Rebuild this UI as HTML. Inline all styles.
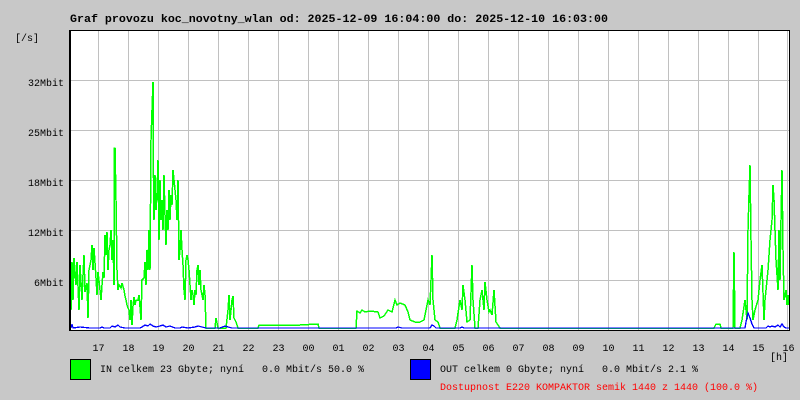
<!DOCTYPE html>
<html><head><meta charset="utf-8"><style>
html,body{margin:0;padding:0;background:#c8c8c8;}
svg{display:block}
text{font-family:"Liberation Mono","DejaVu Sans Mono",monospace;font-size:10px;fill:#000}
</style></head><body>
<svg width="800" height="400" viewBox="0 0 800 400" xmlns="http://www.w3.org/2000/svg">
<rect x="0" y="0" width="800" height="400" fill="#c8c8c8"/>
<rect x="70" y="30" width="720" height="300" fill="#fff"/>
<g stroke="#c0c0c0" stroke-width="1" shape-rendering="crispEdges">
<path d="M98.5 30V330M128.5 30V330M158.5 30V330M188.5 30V330M218.5 30V330M248.5 30V330M278.5 30V330M308.5 30V330M338.5 30V330M368.5 30V330M398.5 30V330M428.5 30V330M458.5 30V330M488.5 30V330M518.5 30V330M548.5 30V330M578.5 30V330M608.5 30V330M638.5 30V330M668.5 30V330M698.5 30V330M728.5 30V330M758.5 30V330M787.5 30V330"/>
<path d="M70 80.5H790M70 130.5H790M70 180.5H790M70 230.5H790M70 280.5H790"/>
</g>
<polyline fill="none" stroke="#00ff00" stroke-width="1.5" shape-rendering="crispEdges" points="71,310 72,262 73,300 74,258 76,285 77,262 79,310 80,265 82,300 83,275 84,255 85,292 87,283 88,318 89,270 91,260 92,245 93,270 94,248 96,278 97,295 98,272 100,290 101,300 102,285 103,272 104,278 105,235 106,255 107,232 108,270 109,250 110,245 111,230 112,260 113,240 114,285 114,148 115,148 116,200 117,270 118,290 119,285 120,286 121,288 122,283 124,290 125,296 126,300 127,305 128,308 129,310 130,320 131,300 132,325 133,306 134,297 135,305 136,300 138,300 139,295 140,307 141,320 142,280 144,278 145,262 146,285 147,250 148,270 149,230 150,270 151,140 152,110 153,82 153,135 154,220 155,175 156,210 157,195 158,160 159,240 160,180 161,220 162,200 163,230 164,175 165,215 166,245 167,210 168,230 169,190 170,220 171,195 172,205 173,170 174,180 175,190 176,200 177,220 178,180 179,260 180,250 181,230 182,250 183,265 184,290 185,300 186,260 187,255 188,260 189,270 190,285 191,300 192,290 193,295 194,305 195,290 196,295 197,270 198,265 199,285 200,270 201,290 202,295 203,300 204,285 205,295 206,328 215,328 216,318 218,328 226,328 228,310 229,295 230,320 232,300 233,296 234,318 236,322 238,328 258,328 259,325 300,325 318,324 319,328 356,328 357,311 360,313 362,310 365,312 370,311 378,312 380,318 384,316 388,310 392,312 395,300 397,305 400,303 405,305 408,312 410,320 415,322 420,322 424,320 428,300 430,305 431,280 432,255 433,300 435,320 438,322 440,328 455,328 457,320 460,300 462,310 463,285 465,300 467,322 470,320 472,265 473,300 475,328 478,328 480,300 482,290 484,310 485,282 487,300 489,312 490,310 492,315 494,290 496,322 500,328 714,328 716,324 720,324 721,328 733,328 734,252 735,328 740,328 742,320 745,300 747,320 748,230 749,195 750,165 751,240 752,300 753,320 755,310 758,300 760,280 762,265 764,320 765,300 768,270 770,240 772,220 773,185 774,200 776,260 778,290 779,230 780,280 781,220 782,170 783,250 784,300 786,290 787,305 788,295 789,305"/>
<polyline fill="none" stroke="#0000ff" stroke-width="1.3" shape-rendering="crispEdges" points="71,328 72,324 73,328 80,327 90,328 100,328 102,327 104,328 110,328 112,326 115,327 118,325 120,327 125,328 135,328 140,328 142,327 145,325 148,326 150,324 153,326 156,327 160,326 163,325 166,327 170,326 175,328 180,328 182,327 188,328 195,327 198,326 202,327 206,328 215,328 220,328 225,326 228,327 232,328 240,328 396,328 398,327 402,328 430,328 432,325 434,326 436,328 460,328 462,327 464,328 745,328 746,322 748,313 750,318 752,324 754,328 766,328 768,326 770,327 772,326 775,327 778,325 780,327 782,324 784,327 786,328 789,328"/>
<g stroke="#000" stroke-width="1" shape-rendering="crispEdges" fill="none">
<path d="M69.5 30V331M70.5 30V331M70 30.5H790M789.5 30V331M70 330.5H790"/>
</g>
<text x="70" y="22" textLength="538" lengthAdjust="spacingAndGlyphs" style="font-size:11.3px;font-weight:bold">Graf provozu koc_novotny_wlan od: 2025-12-09 16:04:00 do: 2025-12-10 16:03:00</text>
<text x="15" y="41">[/s]</text>
<g text-anchor="end">
<text x="64" y="86">32Mbit</text>
<text x="64" y="136">25Mbit</text>
<text x="64" y="186">18Mbit</text>
<text x="64" y="236">12Mbit</text>
<text x="64" y="286">6Mbit</text>
</g>
<g text-anchor="middle">
<text x="98.5" y="351">17</text><text x="128.5" y="351">18</text><text x="158.5" y="351">19</text><text x="188.5" y="351">20</text><text x="218.5" y="351">21</text><text x="248.5" y="351">22</text><text x="278.5" y="351">23</text><text x="308.5" y="351">00</text><text x="338.5" y="351">01</text><text x="368.5" y="351">02</text><text x="398.5" y="351">03</text><text x="428.5" y="351">04</text><text x="458.5" y="351">05</text><text x="488.5" y="351">06</text><text x="518.5" y="351">07</text><text x="548.5" y="351">08</text><text x="578.5" y="351">09</text><text x="608.5" y="351">10</text><text x="638.5" y="351">11</text><text x="668.5" y="351">12</text><text x="698.5" y="351">13</text><text x="728.5" y="351">14</text><text x="758.5" y="351">15</text><text x="788.5" y="351">16</text>
</g>
<text x="770" y="360">[h]</text>
<rect x="70.5" y="359.5" width="20" height="20" fill="#00ff00" stroke="#000"/>
<text x="100" y="372" xml:space="preserve">IN celkem 23 Gbyte; nyní   0.0 Mbit/s 50.0 %</text>
<rect x="410.5" y="359.5" width="20" height="20" fill="#0000ff" stroke="#000"/>
<text x="440" y="372" xml:space="preserve">OUT celkem 0 Gbyte; nyní   0.0 Mbit/s 2.1 %</text>
<text x="440" y="390" style="fill:#ff0000">Dostupnost E220 KOMPAKTOR semik 1440 z 1440 (100.0 %)</text>
</svg>
</body></html>
